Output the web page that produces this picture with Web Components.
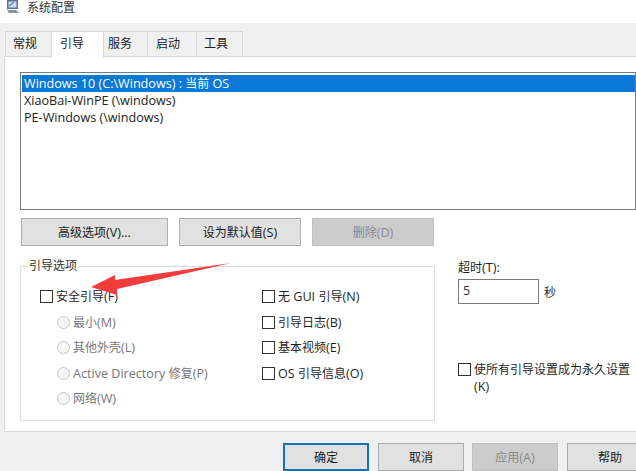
<!DOCTYPE html>
<html><head><meta charset="utf-8">
<style>
html,body{margin:0;padding:0;background:#f0f0f0}
body{width:636px;height:471px;overflow:hidden;font:12px "Open Sans","Noto Sans CJK SC",sans-serif;color:#1a1a1a}
</style></head><body>
<sys-config></sys-config>
<script>
const FONT='"Open Sans","Noto Sans CJK SC",sans-serif';
const EM='em{font-style:normal;font-size:12.6px}';
class Base extends HTMLElement{
  constructor(){super();this.attachShadow({mode:'open'}).innerHTML=this.constructor.html}
}
class WinBtn extends Base{
  static html=`<style>
  :host{display:flex;align-items:center;justify-content:center;box-sizing:border-box;width:var(--w,auto);border:1px solid #adadad;background:#e1e1e1;font-size:12px;color:#1a1a1a}
  :host([disabled]){background:#cccccc;border-color:#bfbfbf;color:#8a8a8a}
  :host([primary]){border:2px solid #0d73bd}
  </style><slot></slot>`;
}
class WinCheck extends Base{
  static html=`<style>
  :host{display:flex;align-items:flex-start;gap:3px;font-size:12px;line-height:17px;color:#1f1f1f}
  i{flex:none;width:11px;height:11px;border:1px solid #333;background:#fff;margin-top:2px}
  </style><i></i><span><slot></slot></span>`;
}
class WinRadio extends Base{
  static html=`<style>
  :host{display:flex;align-items:center;gap:3px;font-size:12px;line-height:17px;color:#777;padding-left:17px}
  i{flex:none;width:11px;height:11px;border:1px solid #c4c4c4;border-radius:50%;background:#f6f6f6}
  </style><i></i><span><slot></slot></span>`;
}
class WinTab extends Base{
  static html=`<style>
  :host{display:flex;align-items:center;box-sizing:border-box;height:25px;border:1px solid #d9d9d9;border-bottom:0;border-left-width:0;background:#f0f0f0;font-size:12px;color:#222;margin-bottom:1px;padding-bottom:2px}
  :host([first]){border-left-width:1px}
  :host([active]){height:27px;background:#fff;border-left-width:1px;margin:0 -1px -1px -1px;position:relative;z-index:1;padding-bottom:5px}
  </style><slot></slot>`;
}
class BootList extends Base{
  static html=`<style>
  :host{display:block;box-sizing:border-box;height:138px;border:1px solid #7a7a7a;background:#fff;padding:2px 0 0 1px;font-size:12px;line-height:17px;color:#222}
  div{padding-left:2px;height:17px;white-space:nowrap}
  .sel{background:#0a78d7;color:#fff}
  ${EM}
  </style>
  <div class="sel"><em>Windows 10 (C:\\Windows) : </em>当前<em> OS</em></div>
  <div><em>XiaoBai-WinPE (\\windows)</em></div>
  <div><em>PE-Windows (\\windows)</em></div>`;
}
class BootOptions extends Base{
  static html=`<style>
  :host{display:block;box-sizing:border-box;width:415px;height:155px;border:1px solid #dcdcdc;position:relative;background:#fff}
  .legend{position:absolute;left:7px;top:-9px;background:#fff;padding:0 1px;font-size:12px;line-height:16px;color:#333}
  .cols{display:grid;grid-template-columns:222px 1fr;padding:21px 0 0 19px}
  .l{display:flex;flex-direction:column;}
  .l win-radio{margin-top:8px}
  .l win-radio:nth-child(2),.l win-radio:nth-child(4){margin-top:9px}
  .r{display:flex;flex-direction:column;gap:9px}
  .r win-check:nth-child(3){margin-top:-1px}
  ${EM}
  </style>
  <span class="legend">引导选项</span>
  <div class="cols">
    <div class="l">
      <win-check>安全引导<em>(F)</em></win-check>
      <win-radio>最小<em>(M)</em></win-radio>
      <win-radio>其他外壳<em>(L)</em></win-radio>
      <win-radio><em>Active Directory </em>修复<em>(P)</em></win-radio>
      <win-radio>网络<em>(W)</em></win-radio>
    </div>
    <div class="r">
      <win-check>无<em> GUI </em>引导<em>(N)</em></win-check>
      <win-check>引导日志<em>(B)</em></win-check>
      <win-check>基本视频<em>(E)</em></win-check>
      <win-check><em>OS </em>引导信息<em>(O)</em></win-check>
    </div>
  </div>`;
}
class TitleBar extends Base{
  static html=`<style>
  :host{display:flex;align-items:center;height:23px;background:#fff;box-sizing:border-box;padding:0 0 9px 6px;gap:8px;font-size:12px;color:#333}
  svg{display:block;flex:none}
  </style>
  <svg width="13" height="14" viewBox="0 0 13 14">
    <rect x="1" y="0" width="11" height="9" fill="#5f6f90"/>
    <rect x="2.500" y="1.500" width="8" height="6" fill="#cfdcf0"/>
    <path d="M3 6L8 2" stroke="#5a8fd0" stroke-width="1.500"/>
    <path d="M1 10h9l3 3H3z" fill="#8a94a8"/>
  </svg>
  <slot></slot>`;
}
class SysConfig extends Base{
  static html=`<style>
  :host{display:block;width:636px;height:471px;position:relative;overflow:hidden;font-family:${FONT};background:#f0f0f0}
  .tabs{display:grid;grid-template-columns:47px 51px 45px 49px 46px;padding:8px 0 0 5px;height:25px;align-items:end;position:relative;z-index:1}
  .panel{box-sizing:border-box;margin:0 0 0 4px;height:376px;border:1px solid #d9d9d9;border-right:0;background:#fff;padding:15px 0 0 15px}
  .btns{display:grid;grid-template-columns:147px 122px 122px;column-gap:11px;height:28px;margin:8px 0 0 1px}
  .mid{display:grid;grid-template-columns:415px 1fr;margin-top:20px;}
  .side{padding-left:23px;display:flex;flex-direction:column}
  .tl{font-size:12px;line-height:17px;color:#222;margin-top:-7px}
  .tr{display:flex;align-items:center;gap:5px;margin-top:3px;font-size:12px;color:#333}
  .box{box-sizing:border-box;width:81px;height:25px;border:1px solid #7a7a7a;padding-left:4px;line-height:21px;font-size:12.6px}
  win-check.perm{margin-top:57px;width:175px}
  .foot{display:grid;grid-template-columns:95px 94px 95px 86px;height:28px;padding:11px 0 0 283px;--w:86px}
  svg.arrow{position:absolute;left:0;top:0;pointer-events:none;z-index:5}
  ${EM}
  </style>
  <title-bar>系统配置</title-bar>
  <div class="tabs">
    <win-tab first style="padding-left:7px">常规</win-tab><win-tab active style="padding-left:8px">引导</win-tab><win-tab style="padding-left:5px">服务</win-tab><win-tab style="padding-left:8px">启动</win-tab><win-tab style="padding-left:7px">工具</win-tab>
  </div>
  <div class="panel">
    <boot-list></boot-list>
    <div class="btns">
      <win-btn>高级选项<em>(V)...</em></win-btn><win-btn>设为默认值<em>(S)</em></win-btn><win-btn disabled>删除<em>(D)</em></win-btn>
    </div>
    <div class="mid">
      <boot-options></boot-options>
      <div class="side">
        <div class="tl">超时<em>(T):</em></div>
        <div class="tr"><div class="box">5</div><span>秒</span></div>
        <win-check class="perm">使所有引导设置成为永久设置<em> (K)</em></win-check>
      </div>
    </div>
  </div>
  <div class="foot">
    <win-btn primary>确定</win-btn><win-btn>取消</win-btn><win-btn disabled>应用<em>(A)</em></win-btn><win-btn>帮助</win-btn>
  </div>
  <svg class="arrow" width="636" height="471" viewBox="0 0 636 471"><path d="M231 263L115 280L115 275L91 287L117 295L117 289Z" fill="#f23c3c"/></svg>`;
}
[['win-btn',WinBtn],['win-check',WinCheck],['win-radio',WinRadio],['win-tab',WinTab],['boot-list',BootList],['boot-options',BootOptions],['title-bar',TitleBar],['sys-config',SysConfig]].forEach(([n,c])=>customElements.define(n,c));
</script>
</body></html>
